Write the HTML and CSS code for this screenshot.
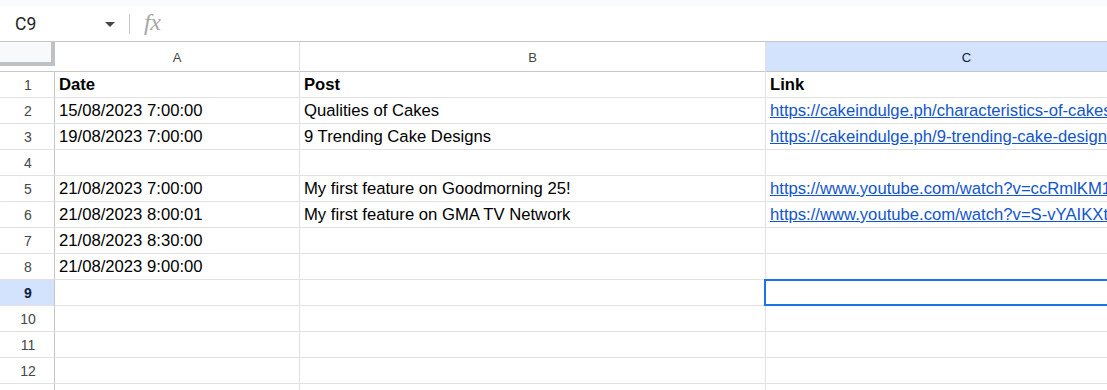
FILE: index.html
```html
<!DOCTYPE html>
<html lang="en">
<head>
    <meta charset="UTF-8">
    <title>Sheet</title>
    <link rel="stylesheet" href="styles.css">
</head>
<body>
    <div class="formula-bar">
        <div class="name-box">
            <span class="cell-ref">C9</span>
            <span class="caret"></span>
        </div>
        <span class="divider"></span>
        <span class="fx">fx</span>
    </div>

    <div class="sheet">
        <div class="corner"><div class="freeze"></div></div>
        <div class="col-head">A</div>
        <div class="col-head">B</div>
        <div class="col-head active">C</div>

        <div class="row-head">1</div>
        <div class="cell bold">Date</div>
        <div class="cell bold">Post</div>
        <div class="cell bold">Link</div>

        <div class="row-head">2</div>
        <div class="cell">15/08/2023 7:00:00</div>
        <div class="cell">Qualities of Cakes</div>
        <div class="cell"><a href="#">https://cakeindulge.ph/characteristics-of-cakes/</a></div>

        <div class="row-head">3</div>
        <div class="cell">19/08/2023 7:00:00</div>
        <div class="cell">9 Trending Cake Designs</div>
        <div class="cell"><a href="#">https://cakeindulge.ph/9-trending-cake-designs/</a></div>

        <div class="row-head">4</div>
        <div class="cell"></div>
        <div class="cell"></div>
        <div class="cell"></div>

        <div class="row-head">5</div>
        <div class="cell">21/08/2023 7:00:00</div>
        <div class="cell">My first feature on Goodmorning 25!</div>
        <div class="cell"><a href="#">https://www.youtube.com/watch?v=ccRmlKM1xyz</a></div>

        <div class="row-head">6</div>
        <div class="cell">21/08/2023 8:00:01</div>
        <div class="cell">My first feature on GMA TV Network</div>
        <div class="cell"><a href="#">https://www.youtube.com/watch?v=S-vYAIKXtab</a></div>

        <div class="row-head">7</div>
        <div class="cell">21/08/2023 8:30:00</div>
        <div class="cell"></div>
        <div class="cell"></div>

        <div class="row-head">8</div>
        <div class="cell">21/08/2023 9:00:00</div>
        <div class="cell"></div>
        <div class="cell"></div>

        <div class="row-head active">9</div>
        <div class="cell"></div>
        <div class="cell"></div>
        <div class="cell selected"><div class="selection"></div></div>

        <div class="row-head">10</div>
        <div class="cell"></div>
        <div class="cell"></div>
        <div class="cell"></div>

        <div class="row-head">11</div>
        <div class="cell"></div>
        <div class="cell"></div>
        <div class="cell"></div>

        <div class="row-head">12</div>
        <div class="cell"></div>
        <div class="cell"></div>
        <div class="cell"></div>

        <div class="row-head">13</div>
        <div class="cell"></div>
        <div class="cell"></div>
        <div class="cell"></div>
    </div>
</body>
</html>
```

FILE: styles.css
```css
* {
    margin: 0;
    padding: 0;
    box-sizing: border-box;
}

html, body {
    width: 1107px;
    height: 390px;
    overflow: hidden;
    background: #fff;
}

body {
    font-family: 'Liberation Sans', Arial, sans-serif;
    color: #000;
}

/* formula bar */
.formula-bar {
    height: 42px;
    border-top: 6px solid #f9fbfd;
    border-bottom: 1px solid #c4c7c5;
    display: flex;
    align-items: center;
    background: #fff;
}

.name-box {
    width: 129px;
    display: flex;
    align-items: center;
    padding-left: 15px;
}

.cell-ref {
    font-family: Roboto, 'Liberation Sans', sans-serif;
    font-size: 17.5px;
    color: #1f1f1f;
    flex: 1;
}

.caret {
    width: 0;
    height: 0;
    border-left: 5px solid transparent;
    border-right: 5px solid transparent;
    border-top: 5px solid #444746;
    margin-right: 14px;
    margin-top: 1px;
}

.divider {
    width: 1px;
    height: 20px;
    background: #c7c7c7;
}

.fx {
    font-family: 'Liberation Serif', 'DejaVu Serif', serif;
    font-style: italic;
    font-size: 24px;
    color: #a6a6a6;
    margin-left: 14px;
    letter-spacing: -0.5px;
    margin-top: -3px;
}

/* grid */
.sheet {
    display: grid;
    grid-template-columns: 55px 245px 466px 402px;
    grid-template-rows: 30px;
    grid-auto-rows: 26px;
}

.corner {
    background: #fff;
    border-bottom: 1px solid #c4c7c5;
    padding-bottom: 5px;
}

.freeze {
    height: 100%;
    background: #f8f9fa;
    border-right: 4px solid #bfc2c5;
    border-bottom: 4px solid #bfc2c5;
}

.col-head {
    display: flex;
    align-items: center;
    justify-content: center;
    font-size: 13px;
    color: #444746;
    border-right: 1px solid #e1e1e1;
    border-bottom: 1px solid #c4c7c5;
    padding-top: 1px;
}

.row-head {
    display: flex;
    align-items: center;
    justify-content: center;
    font-size: 14px;
    color: #444746;
    border-right: 1px solid #c4c7c5;
    border-bottom: 1px solid #e1e1e1;
    padding-left: 2px;
}

.col-head.active,
.row-head.active {
    background: #d3e3fd;
    color: #0b1f3f;
}

.row-head.active {
    font-weight: bold;
}

.cell {
    position: relative;
    display: flex;
    align-items: flex-end;
    font-size: 16.67px;
    padding: 0 4px 2px 4px;
    border-right: 1px solid #e1e1e1;
    border-bottom: 1px solid #e1e1e1;
    white-space: nowrap;
    overflow: hidden;
}

.cell.selected {
    overflow: visible;
}

.cell.bold {
    font-weight: bold;
}

.cell a {
    color: #1155cc;
    text-decoration: underline;
}

.selection {
    position: absolute;
    top: -1px;
    left: -2px;
    right: -1px;
    bottom: -1px;
    border: 2px solid #1a73e8;
}
```
